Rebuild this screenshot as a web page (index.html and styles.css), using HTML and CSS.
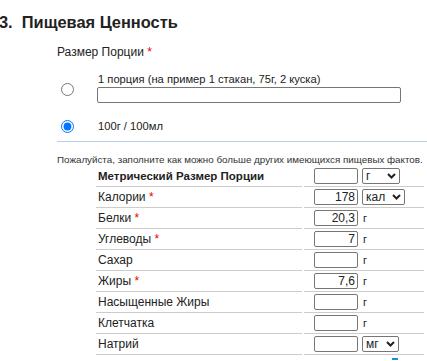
FILE: index.html
```html
<!DOCTYPE html>
<html lang="ru">
<head>
    <meta charset="UTF-8">
    <meta name="viewport" content="width=device-width, initial-scale=1.0">
    <title>Пищевая Ценность</title>
    <link rel="stylesheet" href="styles.css">
</head>
<body>

    <h2 class="step-title">3.&nbsp; Пищевая Ценность</h2>

    <div class="section">
        <div class="field-label">Размер Порции <span class="req">*</span></div>

        <!-- Serving options -->
        <div class="serving-option">
            <input type="radio" name="serving" class="radio">
            <div class="option-body">
                <label class="option-text">1 порция (на пример 1 стакан, 75г, 2 куска)</label>
                <input type="text" class="serving-text">
            </div>
        </div>
        <div class="serving-option second">
            <input type="radio" name="serving" class="radio" checked>
            <label class="option-text">100г / 100мл</label>
        </div>

        <div class="divider"></div>

        <p class="hint">Пожалуйста, заполните как можно больше других имеющихся пищевых фактов.</p>

        <!-- Nutrition facts -->
        <table class="facts">
            <tr>
                <td class="name strong">Метрический Размер Порции</td>
                <td class="value">
                    <div class="value-row">
                        <input type="text" class="num">
                        <span class="select-wrap">
                            <select class="unit"><option>г</option></select>
                            <svg class="chevron" width="9" height="6" viewBox="0 0 9 6"><path d="M1 1l3.5 3.5L8 1" fill="none" stroke="#222" stroke-width="2"/></svg>
                        </span>
                    </div>
                </td>
            </tr>
            <tr>
                <td class="name">Калории <span class="req">*</span></td>
                <td class="value">
                    <div class="value-row">
                        <input type="text" class="num" value="178">
                        <span class="select-wrap">
                            <select class="unit wide"><option>кал</option></select>
                            <svg class="chevron" width="9" height="6" viewBox="0 0 9 6"><path d="M1 1l3.5 3.5L8 1" fill="none" stroke="#222" stroke-width="2"/></svg>
                        </span>
                    </div>
                </td>
            </tr>
            <tr>
                <td class="name">Белки <span class="req">*</span></td>
                <td class="value"><div class="value-row"><input type="text" class="num" value="20,3"><span class="suffix">г</span></div></td>
            </tr>
            <tr>
                <td class="name">Углеводы <span class="req">*</span></td>
                <td class="value"><div class="value-row"><input type="text" class="num" value="7"><span class="suffix">г</span></div></td>
            </tr>
            <tr>
                <td class="name">Сахар</td>
                <td class="value"><div class="value-row"><input type="text" class="num"><span class="suffix">г</span></div></td>
            </tr>
            <tr>
                <td class="name">Жиры <span class="req">*</span></td>
                <td class="value"><div class="value-row"><input type="text" class="num" value="7,6"><span class="suffix">г</span></div></td>
            </tr>
            <tr>
                <td class="name">Насыщенные Жиры</td>
                <td class="value"><div class="value-row"><input type="text" class="num"><span class="suffix">г</span></div></td>
            </tr>
            <tr>
                <td class="name">Клетчатка</td>
                <td class="value"><div class="value-row"><input type="text" class="num"><span class="suffix">г</span></div></td>
            </tr>
            <tr>
                <td class="name">Натрий</td>
                <td class="value">
                    <div class="value-row">
                        <input type="text" class="num">
                        <span class="select-wrap">
                            <select class="unit narrow"><option>мг</option></select>
                            <svg class="chevron" width="9" height="6" viewBox="0 0 9 6"><path d="M1 1l3.5 3.5L8 1" fill="none" stroke="#222" stroke-width="2"/></svg>
                        </span>
                    </div>
                </td>
            </tr>
        </table>
        <div class="more-link"></div>
    </div>

</body>
</html>
```

FILE: styles.css
```css
* {
    box-sizing: border-box;
}

body {
    margin: 0;
    font-family: 'Liberation Sans', Arial, sans-serif;
    color: #222;
    background: #fff;
    overflow: hidden;
}

.step-title {
    margin: 12px 0 0 -1px;
    font-size: 16.4px;
    line-height: 20px;
    font-weight: bold;
    color: #222;
}

.section {
    padding-left: 57px;
}

.field-label {
    margin-top: 13px;
    font-size: 12px;
    line-height: 14px;
    color: #222;
}

.req {
    color: #e00;
}

.serving-option {
    display: flex;
    align-items: center;
    margin-top: 13px;
}

.serving-option.second {
    margin-top: 16px;
}

.radio {
    width: 13px;
    height: 13px;
    margin: 3px 24px 0 4px;
}

.second .radio {
    margin-top: 0;
}

.option-body {
    display: flex;
    flex-direction: column;
    gap: 1px;
}

.option-text {
    font-size: 11.2px;
    line-height: 14px;
    color: #222;
}

.serving-text {
    width: 304px;
    height: 16px;
    margin: 0 0 0 -1px;
    border: 1px solid #767676;
    border-radius: 2px;
}

.divider {
    height: 1px;
    margin-top: 8px;
    background: #b3d0ee;
}

.hint {
    margin: 12px 0 0;
    font-size: 9.8px;
    line-height: 12px;
    color: #333;
    white-space: nowrap;
}

.facts {
    margin: 0 0 0 37px;
    border-collapse: separate;
    border-spacing: 2px 0;
    width: 332px;
}

.facts td {
    padding: 2px 0;
    border-bottom: 1px solid #ccc;
    font-size: 12px;
    height: 21px;
}

.facts .name {
    width: 206px;
    padding-left: 2px;
}

.facts .strong {
    font-weight: bold;
    font-size: 11.5px;
}

.facts .value {
    padding-left: 10px;
}

.value-row {
    display: flex;
    align-items: center;
    gap: 4px;
}

.num {
    width: 44px;
    height: 16px;
    margin: 0;
    padding: 0 2px;
    border: 1px solid #767676;
    border-radius: 2px;
    text-align: right;
    font-family: inherit;
    font-size: 12px;
    color: #222;
}

.select-wrap {
    position: relative;
    display: flex;
}

.unit {
    width: 38px;
    height: 16px;
    margin: 0;
    padding: 0 0 0 3px;
    border: 1px solid #767676;
    border-radius: 2px;
    font-family: inherit;
    font-size: 12px;
    line-height: 14px;
    background: #fff;
    color: #222;
    appearance: none;
    -webkit-appearance: none;
}

.unit.wide {
    width: 43px;
}

.unit.narrow {
    width: 37px;
}

.chevron {
    position: absolute;
    right: 4px;
    top: 5px;
    pointer-events: none;
}

.suffix {
    margin-left: 1px;
    font-size: 11px;
}

.more-link {
    width: 6px;
    height: 2px;
    margin: 3px 0 0 335px;
    background: #1a8fe0;
}
```
